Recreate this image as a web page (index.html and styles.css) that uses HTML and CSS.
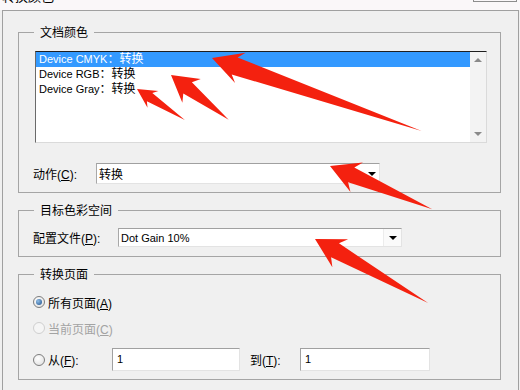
FILE: index.html
```html
<!DOCTYPE html>
<html lang="zh-CN">
<head>
    <meta charset="UTF-8">
    <meta name="viewport" content="width=device-width, initial-scale=1.0">
    <title>转换颜色</title>
    <link rel="stylesheet" href="styles.css">
</head>
<body>
    <div class="titlebar">
        <span class="title">转换颜色</span>
        <span class="close-btn"></span>
    </div>

    <div class="panel">
        <fieldset class="group group-doc">
            <legend>文档颜色</legend>
            <div class="listbox">
                <div class="list-items">
                    <div class="item selected">Device CMYK<span class="cjk">：转换</span></div>
                    <div class="item">Device RGB<span class="cjk">：转换</span></div>
                    <div class="item">Device Gray<span class="cjk">：转换</span></div>
                </div>
                <div class="scrollbar">
                    <span class="scroll-up"></span>
                    <span class="scroll-down"></span>
                </div>
            </div>
            <div class="field-row">
                <label class="field-label label-action">动作(<u>C</u>):</label>
                <div class="combo combo-action">
                    <span class="combo-value">转换</span>
                    <span class="combo-btn"><i class="caret"></i></span>
                </div>
            </div>
        </fieldset>

        <fieldset class="group group-profile">
            <legend>目标色彩空间</legend>
            <div class="field-row">
                <label class="field-label label-profile">配置文件(<u>P</u>):</label>
                <div class="combo combo-profile">
                    <span class="combo-value latin">Dot Gain 10%</span>
                    <span class="combo-btn"><i class="caret"></i></span>
                </div>
            </div>
        </fieldset>

        <fieldset class="group group-pages">
            <legend>转换页面</legend>
            <div class="radio-row">
                <span class="radio checked"></span>
                <span>所有页面(<u>A</u>)</span>
            </div>
            <div class="radio-row disabled">
                <span class="radio"></span>
                <span>当前页面(<u>C</u>)</span>
            </div>
            <div class="radio-row range-row">
                <span class="radio"></span>
                <span class="from-label">从(<u>F</u>):</span>
                <div class="text-input from-input">1</div>
                <span class="to-label">到(<u>T</u>):</span>
                <div class="text-input to-input">1</div>
            </div>
        </fieldset>
    </div>

    <!-- annotation arrows drawn over the dialog -->
    <svg class="arrows" width="520" height="390" viewBox="0 0 520 390">
        <g fill="#f4210f">
            <polygon transform="translate(212 58) rotate(19.2)" points="0,0 30,-16 24,-9 222,0 24,9 30,16"/>
            <polygon transform="translate(171 75) rotate(37.8)" points="0,0 26,-15 21,-7 73,0 21,7 26,15"/>
            <polygon transform="translate(137 89) rotate(32.9)" points="0,0 19,-10 15,-5 57,0 15,5 19,10"/>
            <polygon transform="translate(330 166) rotate(22.9)" points="0,0 29,-16 23,-8 111,0 23,8 29,16"/>
            <polygon transform="translate(315 239) rotate(29.5)" points="0,0 29,-16 23,-8 130,0 23,8 29,16"/>
        </g>
    </svg>
</body>
</html>
```

FILE: styles.css
```css
* {
    margin: 0;
    padding: 0;
    box-sizing: border-box;
}

body {
    position: relative;
    width: 520px;
    height: 390px;
    overflow: hidden;
    background: #f0f0f0;
    font-family: "Liberation Sans", "Noto Sans CJK SC", sans-serif;
    font-size: 12px;
    color: #000;
}

.titlebar {
    display: flex;
    justify-content: space-between;
    height: 10px;
    overflow: hidden;
    background: #faf7f9;
}

.title {
    margin-top: -11px;
    padding-left: 2px;
    font-family: "Noto Sans CJK SC", sans-serif;
    font-size: 13px;
    line-height: 13px;
}

.close-btn {
    width: 44px;
    height: 2px;
    margin-right: 3px;
    border: 1px solid #8d8d8d;
    border-top: none;
}

.panel {
    height: 380px;
    margin: 0 1px 0 2px;
    padding: 0 17px 0 15px;
    border: 1px solid #a0a0a0;
    border-bottom: none;
}

.group {
    border: 1px solid #a5a5a5;
    margin-top: 9px;
}

.group legend {
    margin-left: -1px;
    padding: 0 6px;
    font-family: "Noto Sans CJK SC", sans-serif;
    font-size: 12px;
    line-height: 16px;
}

.group-doc {
    margin-top: 13px;
    padding: 11px 13px 8px 16px;
}

.group-profile {
    padding: 10px 13px 9px 16px;
}

.group-pages {
    padding: 7px 13px 8px 16px;
}

/* list box */
.listbox {
    display: flex;
    height: 92px;
    border: 1px solid;
    border-color: #1f1f1f #dadada #dadada #6a6a6a;
    background: #fff;
}

.list-items {
    flex: 1;
}

.item {
    height: 15px;
    padding-left: 3px;
    font-size: 11px;
    line-height: 15px;
    white-space: nowrap;
    overflow: hidden;
}

.item .cjk {
    font-size: 12px;
}

.item.selected {
    background: #3399ff;
    color: #fff;
}

.scrollbar {
    display: flex;
    flex-direction: column;
    justify-content: space-between;
    align-items: center;
    width: 16px;
    padding: 6px 0;
    background: #f3f3f3;
}

.scroll-up,
.scroll-down {
    width: 0;
    height: 0;
    border-left: 4px solid transparent;
    border-right: 4px solid transparent;
}

.scroll-up {
    border-bottom: 4px solid #8a8a8a;
}

.scroll-down {
    border-top: 4px solid #8a8a8a;
}

/* label + combo rows */
.field-row {
    display: flex;
    align-items: center;
    margin-left: -2px;
}

.group-doc .field-row {
    margin-top: 20px;
}

.label-action {
    width: 63px;
}

.label-profile {
    width: 85px;
}

.combo {
    display: flex;
    align-items: center;
    justify-content: space-between;
    width: 284px;
    padding-left: 2px;
    border: 1px solid;
    border-color: #a0a0a0 #e3e3e3 #e3e3e3 #a8a8a8;
    background: #fff;
}

.combo-action {
    height: 21px;
}

.combo-profile {
    height: 19px;
}

.combo-value.latin {
    font-size: 11px;
}

.combo-btn {
    display: flex;
    align-items: center;
    justify-content: center;
    width: 14px;
    height: 100%;
}

.combo-profile .combo-btn {
    width: 18px;
    border-left: 1px solid #ececec;
    background: #fafafa;
}

.caret {
    border-left: 4px solid transparent;
    border-right: 4px solid transparent;
    border-top: 4px solid #000;
}

/* radio rows */
.radio-row {
    display: flex;
    align-items: center;
    height: 26px;
    margin-left: -2px;
}

.radio {
    display: flex;
    align-items: center;
    justify-content: center;
    width: 12px;
    height: 12px;
    margin-right: 3px;
    border: 1px solid #7d7d7d;
    border-radius: 50%;
    background: radial-gradient(circle at 40% 35%, #fff, #dcdcdc);
}

.radio.checked::after {
    content: "";
    width: 6px;
    height: 6px;
    border-radius: 50%;
    background: radial-gradient(circle at 35% 35%, #8fbde6, #1d4f8a);
}

.radio-row.disabled {
    color: #a3a3a3;
}

.radio-row.disabled .radio {
    border-color: #cfcfcf;
    background: #f5f5f5;
}

.range-row {
    height: 23px;
    margin-top: 7px;
}

.from-label {
    width: 64px;
}

.to-label {
    width: 50px;
    margin-left: 10px;
}

.text-input {
    height: 23px;
    padding-left: 4px;
    border: 1px solid;
    border-color: #a0a0a0 #e3e3e3 #e3e3e3 #a0a0a0;
    background: #fff;
    font-size: 11px;
    line-height: 20px;
}

.from-input {
    width: 128px;
}

.to-input {
    width: 130px;
}

.arrows {
    position: absolute;
    top: 0;
    left: 0;
    pointer-events: none;
}
```
